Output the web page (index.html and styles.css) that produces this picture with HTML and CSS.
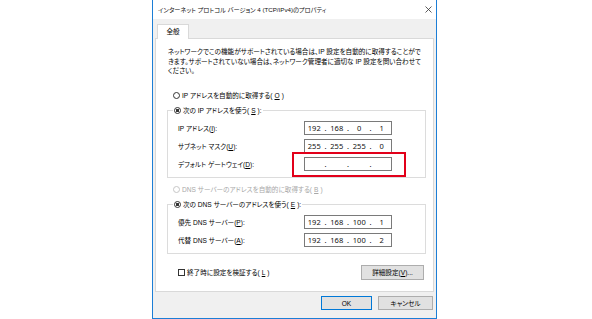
FILE: index.html
```html
<!DOCTYPE html>
<html>
<head>
    <link rel="stylesheet" href="styles.css">
</head>
<body>
    <div class="window">
        <div class="titlebar">
            <span class="title">インターネット プロトコル バージョン 4 (TCP/IPv4)のプロパティ</span>
            <svg class="close" width="7" height="7" viewBox="0 0 7 7">
                <path d="M0.5 0.5 L6.5 6.5 M6.5 0.5 L0.5 6.5" stroke="#333" stroke-width="0.8" fill="none"/>
            </svg>
        </div>
        <div class="body">
            <div class="tabs"><div class="tab">全般</div></div>
            <div class="panel">
                <p class="intro">ネットワークでこの機能がサポートされている場合は、IP 設定を自動的に取得することがで<br>きます。サポートされていない場合は、ネットワーク管理者に適切な IP 設定を問い合わせて<br>ください。</p>

                <div class="option first"><span class="radio"></span>IP アドレスを自動的に取得する(<u>O</u>)</div>
                <fieldset class="group">
                    <legend class="option"><span class="radio checked"></span>次の IP アドレスを使う(<u>S</u>):</legend>
                    <div class="fields">
                        <span>IP アドレス(<u>I</u>):</span>
                        <div class="ip"><span>192</span><i>.</i><span>168</span><i>.</i><span>0</span><i>.</i><span>1</span></div>
                        <span>サブネット マスク(<u>U</u>):</span>
                        <div class="ip"><span>255</span><i>.</i><span>255</span><i>.</i><span>255</span><i>.</i><span>0</span></div>
                        <span>デフォルト ゲートウェイ(<u>D</u>):</span>
                        <div class="ip marked"><span></span><i>.</i><span></span><i>.</i><span></span><i>.</i><span></span><b class="mark"></b></div>
                    </div>
                </fieldset>

                <div class="option disabled"><span class="radio"></span>DNS サーバーのアドレスを自動的に取得する(<u>B</u>)</div>
                <fieldset class="group">
                    <legend class="option"><span class="radio checked"></span>次の DNS サーバーのアドレスを使う(<u>E</u>):</legend>
                    <div class="fields">
                        <span>優先 DNS サーバー(<u>P</u>):</span>
                        <div class="ip"><span>192</span><i>.</i><span>168</span><i>.</i><span>100</span><i>.</i><span>1</span></div>
                        <span>代替 DNS サーバー(<u>A</u>):</span>
                        <div class="ip"><span>192</span><i>.</i><span>168</span><i>.</i><span>100</span><i>.</i><span>2</span></div>
                    </div>
                </fieldset>

                <div class="bottom-row">
                    <div class="check"><span class="box"></span>終了時に設定を検証する(<u>L</u>)</div>
                    <button class="btn detail">詳細設定(<u>V</u>)...</button>
                </div>
            </div>
            <div class="footer">
                <button class="btn ok">OK</button>
                <button class="btn cancel">キャンセル</button>
            </div>
        </div>
    </div>
</body>
</html>
```

FILE: styles.css
```css
body {
    margin: 0;
    background: #fff;
    font-family: "Liberation Sans", "Noto Sans CJK JP", sans-serif;
    font-feature-settings: "palt";
    font-size: 6.6px;
    color: #000;
}

.window {
    margin-left: 152px;
    width: 285px;
    height: 319px;
    box-sizing: border-box;
    border: 1px solid #1c7ed6;
    border-top: none;
    display: flex;
    flex-direction: column;
}

.titlebar {
    height: 19px;
    flex-shrink: 0;
    background: #fff;
    display: flex;
    align-items: center;
    justify-content: space-between;
    padding: 0 4px 0 5px;
}

.title {
    font-size: 6.2px;
    color: #111;
}

.body {
    flex: 1;
    background: #f0f0f0;
    padding: 5px 2px 0;
    display: flex;
    flex-direction: column;
}

.tab {
    width: 32px;
    height: 15px;
    box-sizing: border-box;
    margin-left: 2px;
    margin-bottom: -1px;
    border: 1px solid #d9d9d9;
    border-bottom: none;
    background: #fff;
    position: relative;
    z-index: 1;
    text-align: center;
    line-height: 14px;
}

.panel {
    height: 254px;
    box-sizing: border-box;
    border: 1px solid #d9d9d9;
    background: #fff;
    padding: 8px 7px 0 12px;
}

.intro {
    margin: 0;
    line-height: 9.5px;
    white-space: nowrap;
}

.option {
    display: flex;
    align-items: center;
    gap: 2px;
    height: 13px;
    margin-left: 5px;
    white-space: nowrap;
}

.option.first {
    margin-top: 13px;
}

.option.disabled {
    margin-top: 5px;
    color: #a8a8a8;
}

.option.disabled .radio {
    border-color: #c6c6c6;
}

.radio {
    width: 7px;
    height: 7px;
    box-sizing: border-box;
    border: 1px solid #333;
    border-radius: 50%;
    background: #fff;
    flex-shrink: 0;
}

.radio.checked {
    background: radial-gradient(circle, #333 0 1.4px, #fff 1.9px);
}

.group {
    margin: 2px 0 0 -1px;
    padding: 4px 33px 6px 10px;
    border: 1px solid #dcdcdc;
    min-width: 0;
}

.group legend {
    margin-left: -5px;
    padding: 0 1px;
}

.fields {
    display: grid;
    grid-template-columns: 1fr 88px;
    row-gap: 4px;
    align-items: center;
    white-space: nowrap;
}

.ip {
    height: 14px;
    box-sizing: border-box;
    border: 1px solid #7a7a7a;
    display: grid;
    grid-template-columns: 1fr 4px 1fr 4px 1fr 4px 1fr;
    align-items: center;
    font-family: "Noto Sans", sans-serif;
    font-size: 7.5px;
    line-height: 12px;
    color: #111;
}

.ip span {
    text-align: center;
}

.ip i {
    font-style: normal;
    text-align: center;
}

.marked {
    position: relative;
}

.mark {
    position: absolute;
    left: -13px;
    top: -6px;
    width: 114px;
    height: 25px;
    box-sizing: border-box;
    border: 2px solid #e2001a;
}

.bottom-row {
    margin-top: 11px;
    display: flex;
    align-items: center;
    justify-content: space-between;
}

.check {
    display: flex;
    align-items: center;
    gap: 2px;
    margin-left: 10px;
}

.box {
    width: 7px;
    height: 7px;
    box-sizing: border-box;
    border: 1px solid #333;
    background: #fff;
}

.btn {
    font: inherit;
    color: #000;
    background: #e1e1e1;
    border: 1px solid #adadad;
    padding: 0;
    height: 15px;
}

.detail {
    width: 63px;
    margin-right: 2px;
}

.footer {
    margin-top: 4px;
    display: flex;
    justify-content: flex-end;
    gap: 6px;
    padding-right: 1px;
}

.footer .btn {
    height: 14px;
}

.ok {
    width: 51px;
    border-color: #0078d7;
}

.cancel {
    width: 55px;
}
```
